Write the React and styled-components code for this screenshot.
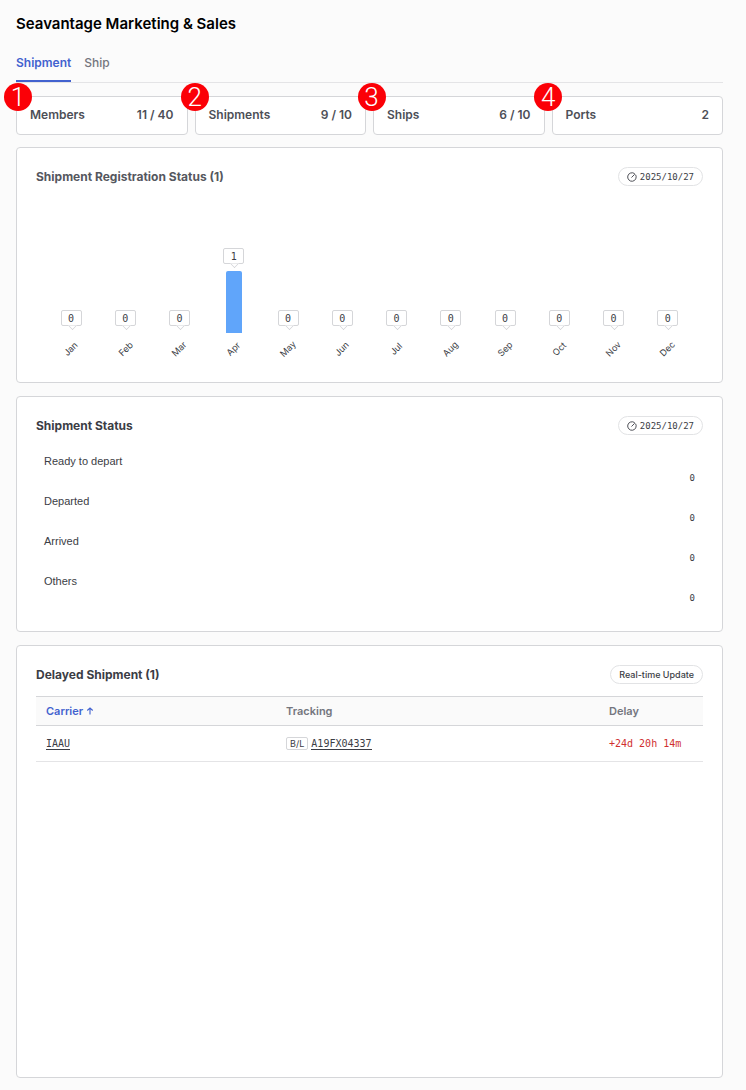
import React from 'react';
import styled, { createGlobalStyle } from 'styled-components';

const summary = [
  { label: 'Members', value: '11 / 40' },
  { label: 'Shipments', value: '9 / 10' },
  { label: 'Ships', value: '6 / 10' },
  { label: 'Ports', value: '2' },
];

const months = [
  { name: 'Jan', count: 0 },
  { name: 'Feb', count: 0 },
  { name: 'Mar', count: 0 },
  { name: 'Apr', count: 1 },
  { name: 'May', count: 0 },
  { name: 'Jun', count: 0 },
  { name: 'Jul', count: 0 },
  { name: 'Aug', count: 0 },
  { name: 'Sep', count: 0 },
  { name: 'Oct', count: 0 },
  { name: 'Nov', count: 0 },
  { name: 'Dec', count: 0 },
];

const statuses = [
  { label: 'Ready to depart', count: 0 },
  { label: 'Departed', count: 0 },
  { label: 'Arrived', count: 0 },
  { label: 'Others', count: 0 },
];

const BAR_UNIT = 62;

function DateIcon() {
  return (
    <svg width="10" height="10" viewBox="0 0 20 20" fill="none" stroke="#3b3d45" strokeWidth="1.8" strokeLinecap="round">
      <path d="M14.6 2.7 A8.6 8.6 0 1 0 17.6 6" />
      <path d="M9.5 10.5 L15 5" />
    </svg>
  );
}

function DateTag() {
  return (
    <Tag $mono>
      <DateIcon />
      2025/10/27
    </Tag>
  );
}

function App() {
  return (
    <Page>
      <GlobalStyle />
      <Title>Seavantage Marketing &amp; Sales</Title>

      <Tabs role="tablist">
        <Tab role="tab" aria-selected="true" $active>Shipment</Tab>
        <Tab role="tab" aria-selected="false">Ship</Tab>
      </Tabs>

      <Summary>
        {summary.map((item) => (
          <SummaryCard key={item.label}>
            <span>{item.label}</span>
            <span>{item.value}</span>
          </SummaryCard>
        ))}
        <Markers>
          {summary.map((item, i) => (
            <Marker key={item.label}>{i + 1}</Marker>
          ))}
        </Markers>
      </Summary>

      <Panels>
        <Panel>
          <PanelHead>
            <PanelTitle $soft>Shipment Registration Status (1)</PanelTitle>
            <DateTag />
          </PanelHead>
          <Chart>
            {months.map((m) => (
              <Column key={m.name}>
                <Bubble>{m.count}</Bubble>
                <Bar style={{ height: m.count * BAR_UNIT }} />
                <Month>{m.name}</Month>
              </Column>
            ))}
          </Chart>
        </Panel>

        <Panel>
          <PanelHead>
            <PanelTitle>Shipment Status</PanelTitle>
            <DateTag />
          </PanelHead>
          <StatusList>
            {statuses.map((s) => (
              <StatusRow key={s.label}>
                <dt>{s.label}</dt>
                <dd>{s.count}</dd>
              </StatusRow>
            ))}
          </StatusList>
        </Panel>

        <Panel $fill>
          <PanelHead>
            <PanelTitle>Delayed Shipment (1)</PanelTitle>
            <Tag>Real-time Update</Tag>
          </PanelHead>
          <Table>
            <colgroup>
              <col width="36%" />
              <col />
              <col width="104" />
            </colgroup>
            <thead>
              <tr>
                <Th aria-sort="ascending">
                  <SortButton>
                    Carrier
                    <svg width="8" height="8" viewBox="0 0 16 16" fill="none" stroke="#4262cf" strokeWidth="2.2">
                      <path d="M8 15 V3 M2.5 7 L8 2 L13.5 7" />
                    </svg>
                  </SortButton>
                </Th>
                <Th>Tracking</Th>
                <Th>Delay</Th>
              </tr>
            </thead>
            <tbody>
              <tr>
                <Td><DataLink href="#carrier">IAAU</DataLink></Td>
                <Td>
                  <Tracking>
                    <Kind>B/L</Kind>
                    <DataLink href="#tracking">A19FX04337</DataLink>
                  </Tracking>
                </Td>
                <Td $late>+24d 20h 14m</Td>
              </tr>
            </tbody>
          </Table>
        </Panel>
      </Panels>
    </Page>
  );
}

export default App;

const GlobalStyle = createGlobalStyle`
  * {
    box-sizing: border-box;
  }
  body {
    margin: 0;
    background: #fbfbfb;
    color: #3b3d45;
    font-family: Inter, 'Liberation Sans', sans-serif;
  }
`;

const Page = styled.main`
  display: flex;
  flex-direction: column;
  min-height: 100vh;
  padding: 12px 23px 12px 16px;
`;

const Title = styled.h1`
  margin: 0;
  color: #000;
  font-size: 15px;
  font-weight: 600;
  line-height: 24px;
`;

const Tabs = styled.div`
  display: flex;
  gap: 13px;
  margin-top: 16px;
  border-bottom: 1px solid #e4e4e6;
`;

const Tab = styled.button`
  height: 30px;
  padding: 0 0 6px;
  border: 0;
  border-bottom: 2px solid ${(p) => (p.$active ? '#4262cf' : 'transparent')};
  background: none;
  color: ${(p) => (p.$active ? '#4262cf' : '#74767e')};
  font-family: inherit;
  font-size: 12px;
  font-weight: ${(p) => (p.$active ? 600 : 500)};
  line-height: 20px;
`;

const Summary = styled.section`
  position: relative;
  display: grid;
  grid-template-columns: repeat(4, 1fr);
  gap: 7px;
  margin-top: 13px;
`;

const SummaryCard = styled.div`
  display: flex;
  justify-content: space-between;
  height: 39px;
  padding: 8px 13px;
  border: 1px solid #d5d6d9;
  border-radius: 4px;
  background: #fff;
  color: #4d4f57;
  font-size: 12px;
  font-weight: 600;
  line-height: 20px;
`;

const Markers = styled.div`
  position: absolute;
  top: -13px;
  left: -12px;
  display: grid;
  grid-template-columns: repeat(4, 1fr);
  width: 100%;
`;

const Marker = styled.span`
  width: 28px;
  height: 28px;
  border-radius: 50%;
  background: #fb0007;
  color: #fff;
  font-family: Roboto, sans-serif;
  font-size: 26px;
  font-weight: 300;
  line-height: 28px;
  text-align: center;
`;

const Panels = styled.div`
  display: flex;
  flex: 1;
  flex-direction: column;
  gap: 13px;
  margin-top: 12px;
`;

const Panel = styled.section`
  flex: ${(p) => (p.$fill ? '1 0 auto' : 'none')};
  min-height: 236px;
  padding: 19px;
  border: 1px solid #d5d6d9;
  border-radius: 4px;
  background: #fff;
`;

const PanelHead = styled.div`
  display: flex;
  align-items: center;
  justify-content: space-between;
  height: 19px;
`;

const PanelTitle = styled.h2`
  margin: 0;
  color: ${(p) => (p.$soft ? '#55575e' : '#3b3d45')};
  font-size: 12px;
  font-weight: 700;
  line-height: 19px;
`;

const Tag = styled.span`
  display: flex;
  align-items: center;
  gap: 3px;
  height: 19px;
  padding: 0 8px;
  border: 1px solid #e2e3e5;
  border-radius: 10px;
  font-family: ${(p) => (p.$mono ? "'DejaVu Sans Mono', monospace" : 'inherit')};
  font-size: 9px;
  font-weight: ${(p) => (p.$mono ? 400 : 500)};
`;

const Chart = styled.div`
  display: grid;
  grid-template-columns: repeat(12, 1fr);
  height: 177px;
  padding: 0 8px;
`;

const Column = styled.div`
  display: flex;
  flex-direction: column;
  align-items: center;
  justify-content: flex-end;
`;

const Bubble = styled.span`
  position: relative;
  width: 21px;
  height: 16px;
  margin-bottom: 7px;
  border: 1px solid #d5d6d9;
  border-radius: 2px;
  font-family: 'DejaVu Sans Mono', monospace;
  font-size: 10px;
  line-height: 15px;
  text-align: center;

  &::after {
    content: '';
    position: absolute;
    left: 7px;
    bottom: -4px;
    width: 6px;
    height: 6px;
    border: solid #d5d6d9;
    border-width: 0 1px 1px 0;
    background: #fff;
    clip-path: polygon(100% 0, 100% 100%, 0 100%);
    transform: rotate(45deg);
  }
`;

const Bar = styled.div`
  width: 16px;
  border-radius: 2px 2px 0 0;
  background: #60a5fa;
`;

const Month = styled.span`
  margin: 10px 0 8px;
  font-size: 9px;
  line-height: 12px;
  transform: rotate(-45deg);
`;

const StatusList = styled.dl`
  margin: 16px 8px 0;
`;

const StatusRow = styled.div`
  display: flex;
  flex-direction: column;
  height: 40px;

  dt {
    font-family: 'Liberation Sans', sans-serif;
    font-size: 11px;
    line-height: 20px;
  }

  dd {
    margin: 0;
    font-family: 'DejaVu Sans Mono', monospace;
    font-size: 9px;
    line-height: 14px;
    text-align: right;
  }
`;

const Table = styled.table`
  width: 100%;
  margin-top: 12px;
  border-collapse: collapse;
  table-layout: fixed;
`;

const Th = styled.th`
  height: 29px;
  padding: 0 10px;
  border-top: 1px solid #d5d6d9;
  border-bottom: 1px solid #d5d6d9;
  background: #fafafa;
  color: #74767e;
  font-size: 11px;
  font-weight: 600;
  text-align: left;
`;

const SortButton = styled.button`
  display: flex;
  align-items: center;
  gap: 3px;
  padding: 0;
  border: 0;
  background: none;
  color: #4262cf;
  font: inherit;
`;

const Td = styled.td`
  height: 36px;
  padding: 0 10px;
  border-bottom: 1px solid #e4e4e6;
  color: ${(p) => (p.$late ? '#d02f2f' : '#3b3d45')};
  font-family: 'DejaVu Sans Mono', monospace;
  font-size: 10px;
`;

const Tracking = styled.div`
  display: flex;
  align-items: center;
  gap: 3px;
`;

const Kind = styled.span`
  height: 13px;
  padding: 0 3px;
  border: 1px solid #d5d6d9;
  border-radius: 2px;
  font-family: Inter, sans-serif;
  font-size: 9px;
  line-height: 12px;
`;

const DataLink = styled.a`
  border-bottom: 1px solid #3b3d45;
  color: inherit;
  line-height: 11px;
  text-decoration: none;
`;
